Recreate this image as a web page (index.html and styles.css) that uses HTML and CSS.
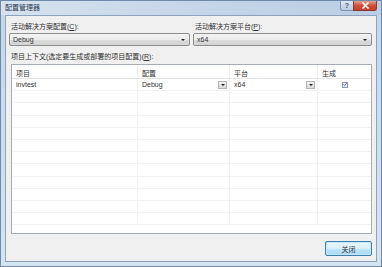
FILE: index.html
```html
<!DOCTYPE html>
<html lang="zh-CN">
<head>
    <meta charset="UTF-8">
    <title>配置管理器</title>
    <link rel="stylesheet" href="styles.css">
</head>
<body>
    <div class="window">
        <div class="titlebar">
            <span class="title">配置管理器</span>
            <div class="caption-buttons">
                <div class="cap-btn help">?</div>
                <div class="cap-btn close">
                    <svg width="9" height="7" viewBox="0 0 9 7">
                        <path d="M1.5 0.5L7.5 6.5M7.5 0.5L1.5 6.5" stroke="#ffffff" stroke-width="1.6"/>
                    </svg>
                </div>
            </div>
        </div>

        <div class="client">
            <div class="selectors">
                <div class="field">
                    <div class="label">活动解决方案配置(<u>C</u>):</div>
                    <div class="combo">
                        <span>Debug</span>
                        <span class="arrow"></span>
                    </div>
                </div>
                <div class="field">
                    <div class="label">活动解决方案平台(<u>P</u>):</div>
                    <div class="combo">
                        <span>x64</span>
                        <span class="arrow"></span>
                    </div>
                </div>
            </div>

            <div class="label context">项目上下文(选定要生成或部署的项目配置)(<u>R</u>):</div>

            <div class="grid">
                <div class="row head">
                    <div class="cell">项目</div>
                    <div class="cell">配置</div>
                    <div class="cell">平台</div>
                    <div class="cell">生成</div>
                </div>
                <div class="row">
                    <div class="cell">invtest</div>
                    <div class="cell drop">
                        <span>Debug</span>
                        <span class="drop-btn"><span class="arrow"></span></span>
                    </div>
                    <div class="cell drop">
                        <span>x64</span>
                        <span class="drop-btn"><span class="arrow"></span></span>
                    </div>
                    <div class="cell check-cell">
                        <span class="checkbox">
                            <svg width="5" height="5" viewBox="0 0 5 5">
                                <path d="M0.5 2.5L2 4L4.5 0.8" stroke="#3c5a99" stroke-width="1" fill="none"/>
                            </svg>
                        </span>
                    </div>
                </div>
                <div class="row"><div class="cell"></div><div class="cell"></div><div class="cell"></div><div class="cell"></div></div>
                <div class="row"><div class="cell"></div><div class="cell"></div><div class="cell"></div><div class="cell"></div></div>
                <div class="row"><div class="cell"></div><div class="cell"></div><div class="cell"></div><div class="cell"></div></div>
                <div class="row"><div class="cell"></div><div class="cell"></div><div class="cell"></div><div class="cell"></div></div>
                <div class="row"><div class="cell"></div><div class="cell"></div><div class="cell"></div><div class="cell"></div></div>
                <div class="row"><div class="cell"></div><div class="cell"></div><div class="cell"></div><div class="cell"></div></div>
                <div class="row"><div class="cell"></div><div class="cell"></div><div class="cell"></div><div class="cell"></div></div>
                <div class="row"><div class="cell"></div><div class="cell"></div><div class="cell"></div><div class="cell"></div></div>
                <div class="row"><div class="cell"></div><div class="cell"></div><div class="cell"></div><div class="cell"></div></div>
                <div class="row"><div class="cell"></div><div class="cell"></div><div class="cell"></div><div class="cell"></div></div>
                <div class="row last"><div class="cell"></div><div class="cell"></div><div class="cell"></div><div class="cell"></div></div>
            </div>

            <div class="footer">
                <div class="button">关闭</div>
            </div>
        </div>
    </div>
</body>
</html>
```

FILE: styles.css
```css
* {
    margin: 0;
    padding: 0;
    box-sizing: border-box;
}

body {
    width: 382px;
    height: 267px;
    overflow: hidden;
    font-family: 'Liberation Sans', 'Noto Sans CJK SC', sans-serif;
    font-size: 7px;
    color: #333333;
}

.window {
    width: 382px;
    height: 267px;
    display: flex;
    flex-direction: column;
    background: linear-gradient(to bottom, #c4d5e8 0%, #c9dbef 30%, #d5e4f3 100%);
    border: 1px solid #6f8aa8;
}

.titlebar {
    height: 14px;
    display: flex;
    justify-content: space-between;
    align-items: flex-start;
    padding-left: 4px;
    background: linear-gradient(to right, #d6e2ef 0%, #c2d4e8 60%, #b9cde4 100%);
}

.title {
    line-height: 14px;
    color: #2a3a50;
    font-size: 7px;
}

.caption-buttons {
    display: flex;
    margin-right: 4px;
}

.cap-btn {
    height: 10px;
    display: flex;
    align-items: center;
    justify-content: center;
    border: 1px solid #7d95b3;
    border-top: none;
}

.cap-btn.help {
    width: 13px;
    border-radius: 0 0 0 3px;
    background: linear-gradient(to bottom, #dbe6f3, #b8cbe1);
    color: #3b4e68;
    font-size: 7px;
    font-weight: bold;
    border-right: none;
}

.cap-btn.close {
    width: 24px;
    border-radius: 0 0 3px 0;
    background: linear-gradient(to bottom, #e6a090, #cc4a32 55%, #c8432b);
    border-color: #8d3a2c;
}

.client {
    flex: 1;
    margin: 0 4px 4px 4px;
    background: #f0f0f0;
    border: 1px solid #8da2bd;
    display: flex;
    flex-direction: column;
    padding: 6px 4px 5px 3px;
}

.selectors {
    display: grid;
    grid-template-columns: 181px 179px;
    column-gap: 3px;
}

.label {
    padding-left: 2px;
    line-height: 9px;
    height: 9px;
    white-space: nowrap;
}

.combo {
    margin-top: 2px;
    height: 13px;
    border: 1px solid #8e8f8f;
    border-radius: 2px;
    background: linear-gradient(to bottom, #f4f4f4 0%, #ebebeb 50%, #dddddd 51%, #d3d3d3 100%);
    display: flex;
    align-items: center;
    justify-content: space-between;
    padding: 0 4px 0 3px;
}

.arrow {
    width: 0;
    height: 0;
    border-left: 2px solid transparent;
    border-right: 2px solid transparent;
    border-top: 2px solid #1e1e1e;
}

.context {
    margin-top: 6px;
}

.grid {
    margin: 3px 0 0 2px;
    height: 170px;
    background: #ffffff;
    border: 1px solid #a6acb6;
    display: flex;
    flex-direction: column;
    overflow: hidden;
}

.row {
    display: grid;
    grid-template-columns: 126px 92px 88px 1fr;
    height: 12.2px;
    flex: none;
    border-bottom: 1px solid #f2f2f2;
}

.row.head {
    height: 14px;
    border-bottom: 1px solid #e4e4e4;
}

.cell {
    border-right: 1px solid #efefef;
    padding-left: 4px;
    display: flex;
    align-items: center;
    white-space: nowrap;
}

.row.head .cell {
    padding-top: 2px;
}

.cell:last-child {
    border-right: none;
}

.cell.drop {
    justify-content: space-between;
    padding-right: 2px;
}

.drop-btn {
    width: 9px;
    height: 8px;
    border: 1px solid #b5b5b5;
    background: linear-gradient(to bottom, #f2f2f2, #d9d9d9);
    display: flex;
    align-items: center;
    justify-content: center;
}

.check-cell {
    justify-content: center;
    padding-left: 0;
}

.checkbox {
    width: 6px;
    height: 6px;
    border: 1px solid #8f98ad;
    background: #e6ebf6;
    display: flex;
    align-items: center;
    justify-content: center;
}

.footer {
    margin-top: auto;
    display: flex;
    justify-content: flex-end;
}

.button {
    width: 47px;
    height: 15px;
    border: 1px solid #3c7fb1;
    border-radius: 2px;
    background: linear-gradient(to bottom, #eaf6fd 0%, #d9f0fc 50%, #bee6fd 51%, #a7d9f5 100%);
    display: flex;
    align-items: center;
    justify-content: center;
    box-shadow: inset 0 0 0 1px #c4e5f6;
}
```
